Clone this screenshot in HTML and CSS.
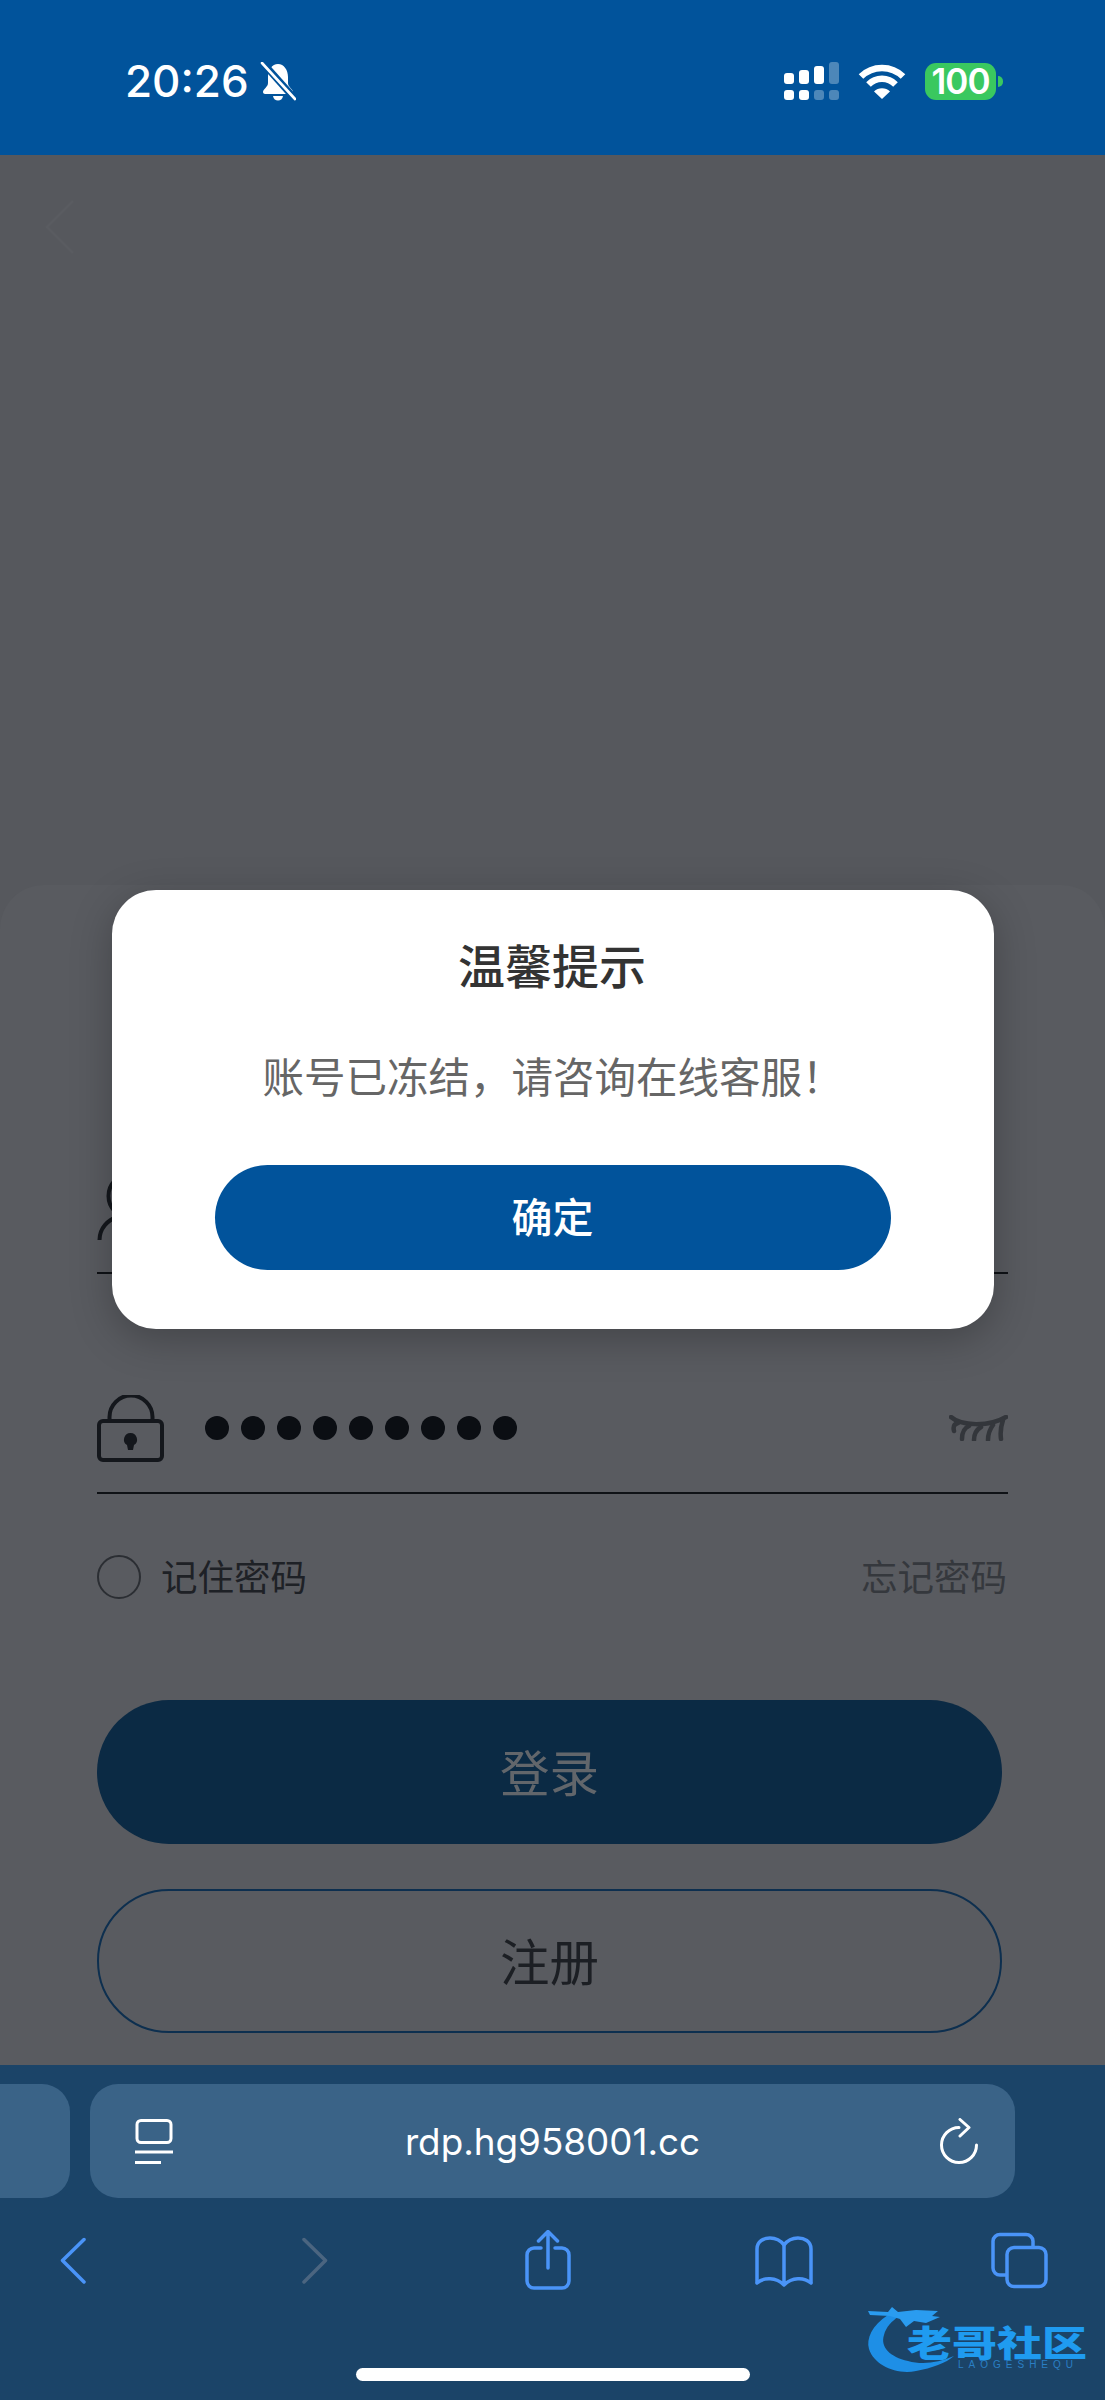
FILE: index.html
```html
<!DOCTYPE html>
<html lang="zh-CN">

<head>
    <meta charset="UTF-8">
    <meta name="viewport" content="width=device-width, initial-scale=1.0">
    <title>登录</title>
    <link rel="stylesheet" href="styles.css">
</head>

<body>
    <!-- Status bar -->
    <header class="status-bar">
        <div class="status-left">
            <span class="time">20:26</span>
            <svg class="icon-bell" width="36" height="39" viewBox="0 0 36 39">
                <path fill="#fff" d="M18 2C12 2 8 8 8 15V21C8 25 3 27 3 30C3 31 4 32 5 32H31C32 32 33 31 33 30C33 27 28 25 28 21V15C28 8 24 2 18 2Z" />
                <path fill="#fff" d="M13 34H23C22.500 37 20.500 38.500 18 38.500C15.500 38.500 13.500 37 13 34Z" />
                <path stroke="#01539b" stroke-width="7" d="M2 0L35 37" />
                <path stroke="#fff" stroke-width="2.6" stroke-linecap="round" d="M2 1L35 37" />
            </svg>
        </div>
        <div class="status-right">
            <svg width="55" height="38" viewBox="0 0 55 38" fill="#fff">
                <rect x="0" y="11" width="10" height="11" rx="3" />
                <rect x="15" y="8" width="10" height="14" rx="3" />
                <rect x="30" y="4" width="10" height="18" rx="3" />
                <rect x="45" y="0" width="10" height="22" rx="3" opacity="0.3" />
                <rect x="0" y="28" width="10" height="10" rx="3" />
                <rect x="15" y="28" width="10" height="10" rx="3" />
                <rect x="30" y="28" width="10" height="10" rx="3" opacity="0.3" />
                <rect x="45" y="28" width="10" height="10" rx="3" opacity="0.3" />
            </svg>
            <svg width="48" height="35" viewBox="0 0 48 35" fill="none" stroke="#fff" stroke-width="6.5">
                <path d="M3 12.500A30 30 0 0 1 45 12.500" />
                <path d="M10.500 20.500A19 19 0 0 1 37.500 20.500" />
                <path fill="#fff" stroke="none" d="M16 27.500A11.500 11.500 0 0 1 32 27.500L24 35Z" />
            </svg>
            <div class="battery">100</div>
        </div>
    </header>

    <!-- Login page (dimmed) -->
    <main class="page">
        <svg class="back-arrow" width="30" height="54" viewBox="0 0 30 54" fill="none">
            <path d="M28 1L2 27L28 53" />
        </svg>
        <section class="sheet">
            <div class="field">
                <svg width="67" height="67" viewBox="0 0 67 67" fill="none" class="line-icon">
                    <circle cx="33.500" cy="21" r="22" />
                    <path d="M2.500 65C2.500 53 11 45 20 42M47 42C56 45 64.500 53 64.500 65" />
                </svg>
            </div>
            <div class="field field-password">
                <svg width="67" height="67" viewBox="0 0 67 67" fill="none" class="line-icon">
                    <rect x="2" y="26" width="63" height="39" rx="4" />
                    <path d="M12.500 26V22A21.500 21.500 0 0 1 55.500 22V26" />
                    <path fill="#14171c" stroke="none" d="M33.500 38A6.500 6.500 0 0 1 37 50L36 55H31L30 50A6.500 6.500 0 0 1 33.500 38Z" />
                </svg>
                <div class="dots">
                    <i></i><i></i><i></i><i></i><i></i><i></i><i></i><i></i><i></i>
                </div>
                <svg class="eye" width="59" height="26" viewBox="0 0 59 26" fill="none">
                    <path d="M2 2C12 11 40 12 57 2" />
                    <path d="M9 8C5 9 4 12 5 16M20 11C15 13 13 18 13 24M32 12C27 15 25 20 25 25M44 10C41 14 39 19 39 25M54 5C52 11 51 17 52 24" />
                </svg>
            </div>
            <div class="options">
                <label class="remember"><span class="radio"></span><span class="remember-text">记住密码</span></label>
                <a href="#forgot" class="forgot">忘记密码</a>
            </div>
            <button class="btn btn-login">登录</button>
            <button class="btn btn-register">注册</button>
        </section>
    </main>

    <!-- Safari toolbar -->
    <footer class="toolbar">
        <div class="url-row">
            <div class="tab-peek"></div>
            <div class="url-bar">
                <svg width="38" height="45" viewBox="0 0 38 45" fill="none" stroke="#fff" stroke-width="3">
                    <rect x="2" y="1.500" width="34" height="22" rx="4" />
                    <path d="M0 33H38M0 43.500H26" />
                </svg>
                <span class="url">rdp.hg958001.cc</span>
                <svg width="38" height="46" viewBox="0 0 38 46" fill="none" stroke="#fff" stroke-width="3" stroke-linecap="round" stroke-linejoin="round">
                    <path d="M19 9.500A17.500 17.500 0 1 0 36.500 27" />
                    <path d="M20 1.500L29 9.500L20 18" />
                </svg>
            </div>
        </div>
        <nav class="nav-row">
            <svg class="nav-back" width="26" height="60" viewBox="0 0 26 60" fill="none">
                <path d="M24 9.500L2.500 30.500L24 52" />
            </svg>
            <svg class="nav-forward" width="26" height="60" viewBox="0 0 26 60" fill="none">
                <path d="M2 9.500L23.500 30.500L2 52" />
            </svg>
            <svg class="nav-share" width="47" height="60" viewBox="0 0 47 60" fill="none">
                <path d="M17 18H10A7 7 0 0 0 3 25V51A7 7 0 0 0 10 58H38A7 7 0 0 0 45 51V25A7 7 0 0 0 38 18H31" />
                <path d="M24 38V2M14.500 11L24 1.500L33.500 11" />
            </svg>
            <svg class="nav-book" width="60" height="60" viewBox="0 0 60 60" fill="none">
                <path d="M3 52V19C3 11 10 8 16 8C22 8 27 11 30 15C33 11 38 8 44 8C50 8 57 11 57 19V52" />
                <path d="M3 53C10 47 22 47 30 55C38 47 50 47 57 53M30 15V54" />
            </svg>
            <svg class="nav-tabs" width="57" height="60" viewBox="0 0 57 60" fill="none">
                <rect x="16" y="17.500" width="39" height="39" rx="7" />
                <path d="M42 16V11A7 7 0 0 0 35 4.500H9A7 7 0 0 0 2 11V38A7 7 0 0 0 9 45H15" />
            </svg>
        </nav>
        <div class="home-indicator"></div>
    </footer>

    <!-- Alert dialog -->
    <div class="dialog">
        <h2>温馨提示</h2>
        <p>账号已冻结，请咨询在线客服！</p>
        <button class="dialog-ok">确定</button>
    </div>

    <!-- Watermark -->
    <div class="watermark">
        <svg width="100" height="75" viewBox="0 0 100 75">
            <path fill="#1e8fe6" d="M22 12C6 22 0 36 3 46C8 62 30 72 50 68C66 65 80 60 88 53C72 60 56 62 42 58C24 54 14 44 18 32C20 24 26 18 32 14Z" />
            <path fill="#2a9cf0" d="M2 8L22 9L26 4L32 9L50 7L72 8L66 13L74 14L60 20L48 18L40 24L34 16L24 13L4 12Z" />
        </svg>
        <span class="wm-name">老哥社区</span>
        <span class="wm-sub">LAOGESHEQU</span>
    </div>
</body>

</html>
```

FILE: styles.css
```css
* {
    margin: 0;
    padding: 0;
    box-sizing: border-box;
}

body {
    width: 1105px;
    height: 2400px;
    display: flex;
    flex-direction: column;
    overflow: hidden;
    position: relative;
    font-family: 'Noto Sans CJK SC', 'Noto Sans', sans-serif;
    background-color: #57595e;
}

svg {
    display: block;
    flex-shrink: 0;
}

/* Status bar */
.status-bar {
    height: 155px;
    padding: 60px 102px 53px 125px;
    display: flex;
    justify-content: space-between;
    align-items: center;
    background-color: #01539b;
    color: white;
}

.status-left {
    display: flex;
    align-items: center;
    gap: 11px;
}

.time {
    font-family: Inter, 'Liberation Sans', sans-serif;
    font-size: 44px;
    font-weight: 500;
    line-height: 42px;
}

.status-right {
    display: flex;
    align-items: center;
    gap: 19px;
}

.battery {
    width: 71px;
    height: 37px;
    border-radius: 11px;
    background-color: #3ac85f;
    position: relative;
    font-family: Inter, 'Liberation Sans', sans-serif;
    font-size: 35px;
    font-weight: 600;
    line-height: 37px;
    letter-spacing: -1px;
    text-align: center;
    margin-right: 7px;
}

.battery::after {
    content: "";
    position: absolute;
    right: -7px;
    top: 13px;
    width: 5px;
    height: 11px;
    border-radius: 0 6px 6px 0;
    background-color: #3ac85f;
}

/* Dimmed login page */
.page {
    flex: 1;
    display: flex;
    flex-direction: column;
    background-color: #56585d;
}

.back-arrow {
    margin: 45px 0 0 45px;
}

.back-arrow path {
    stroke: #5a5c61;
    stroke-width: 2.5;
}

.sheet {
    flex: 1;
    margin-top: 631px;
    padding: 277px 97px 32px;
    border-radius: 44px 44px 0 0;
    background-color: #595b60;
}

.field {
    height: 112px;
    padding-bottom: 18px;
    display: flex;
    align-items: center;
    border-bottom: 2px solid #0f1216;
}

.field-password {
    margin-top: 108px;
}

.line-icon {
    stroke: #14171c;
    stroke-width: 4;
}

.dots {
    display: flex;
    gap: 12px;
    margin-left: 41px;
}

.dots i {
    width: 24px;
    height: 24px;
    border-radius: 50%;
    background-color: #0b0e13;
}

.eye {
    margin-left: auto;
    stroke: #33363b;
    stroke-width: 4.5;
    stroke-linecap: round;
}

.options {
    margin-top: 61px;
    height: 44px;
    display: flex;
    justify-content: space-between;
    align-items: center;
    font-size: 36.5px;
}

.remember {
    display: flex;
    align-items: center;
    gap: 20px;
    color: #1e2126;
}

.remember-text,
.forgot {
    padding-bottom: 3px;
}

.radio {
    width: 44px;
    height: 44px;
    border: 2px solid #2b2e33;
    border-radius: 50%;
}

.forgot {
    color: #35383d;
    text-decoration: none;
    margin-right: 1px;
}

.btn {
    display: block;
    width: 905px;
    height: 144px;
    padding-bottom: 4px;
    border-radius: 72px;
    font-family: inherit;
    font-size: 49.5px;
}

.btn-login {
    margin-top: 101px;
    background-color: #0b2a44;
    color: #62666b;
    border: none;
}

.btn-register {
    margin-top: 45px;
    background: transparent;
    border: 2.5px solid #0d2f4f;
    color: #1c1f24;
}

/* Safari toolbar */
.toolbar {
    height: 336px;
    padding-top: 19px;
    display: flex;
    flex-direction: column;
    background-color: #1b4468;
}

.url-row {
    display: flex;
    gap: 20px;
    height: 114px;
}

.tab-peek {
    width: 70px;
    border-radius: 0 28px 28px 0;
    background-color: #3a6387;
}

.url-bar {
    width: 925px;
    padding: 0 37px 0 45px;
    display: flex;
    justify-content: space-between;
    align-items: center;
    border-radius: 28px;
    background-color: #3a6387;
}

.url {
    font-family: Inter, 'Liberation Sans', sans-serif;
    font-size: 36.8px;
    color: white;
    margin-right: 8px;
}

.nav-row {
    margin-top: 32px;
    padding-left: 60px;
    display: flex;
}

.nav-row svg {
    stroke: #4a94f8;
    stroke-width: 3.5;
    stroke-linecap: round;
    stroke-linejoin: round;
}

.nav-row .nav-forward {
    margin-left: 216px;
    stroke: #4b6580;
}

.nav-share {
    margin-left: 196px;
}

.nav-book {
    margin-left: 183px;
}

.nav-tabs {
    margin-left: 177px;
}

.home-indicator {
    width: 394px;
    height: 13px;
    margin: 78px auto 0;
    border-radius: 7px;
    background-color: white;
}

/* Alert dialog */
.dialog {
    position: absolute;
    left: 112px;
    top: 890px;
    width: 882px;
    height: 439px;
    padding-top: 47px;
    display: flex;
    flex-direction: column;
    align-items: center;
    border-radius: 44px;
    background-color: white;
    box-shadow: 0 10px 40px rgba(0, 0, 0, 0.25);
}

.dialog h2 {
    font-size: 47px;
    font-weight: 500;
    line-height: 54px;
    color: #333;
    margin-right: 2px;
}

.dialog p {
    margin-top: 57px;
    font-size: 41.5px;
    line-height: 54px;
    color: #666;
}

.dialog-ok {
    width: 676px;
    height: 105px;
    margin-top: 63px;
    margin-right: 1px;
    padding-bottom: 5px;
    border: none;
    border-radius: 53px;
    background-color: #01539b;
    color: white;
    font-family: inherit;
    font-size: 41px;
    font-weight: 500;
}

/* Watermark */
.watermark {
    position: absolute;
    left: 866px;
    top: 2303px;
    width: 230px;
    height: 75px;
}

.wm-name {
    position: absolute;
    left: 41px;
    top: 22px;
    font-size: 45px;
    font-weight: 900;
    line-height: 34px;
    white-space: nowrap;
    transform: scaleY(0.8);
    color: #1f9bf0;
}

.wm-sub {
    position: absolute;
    left: 92px;
    top: 57px;
    font-family: 'Liberation Sans', sans-serif;
    font-size: 10px;
    line-height: 10px;
    letter-spacing: 5px;
    color: #2a7fc4;
    white-space: nowrap;
}
```
